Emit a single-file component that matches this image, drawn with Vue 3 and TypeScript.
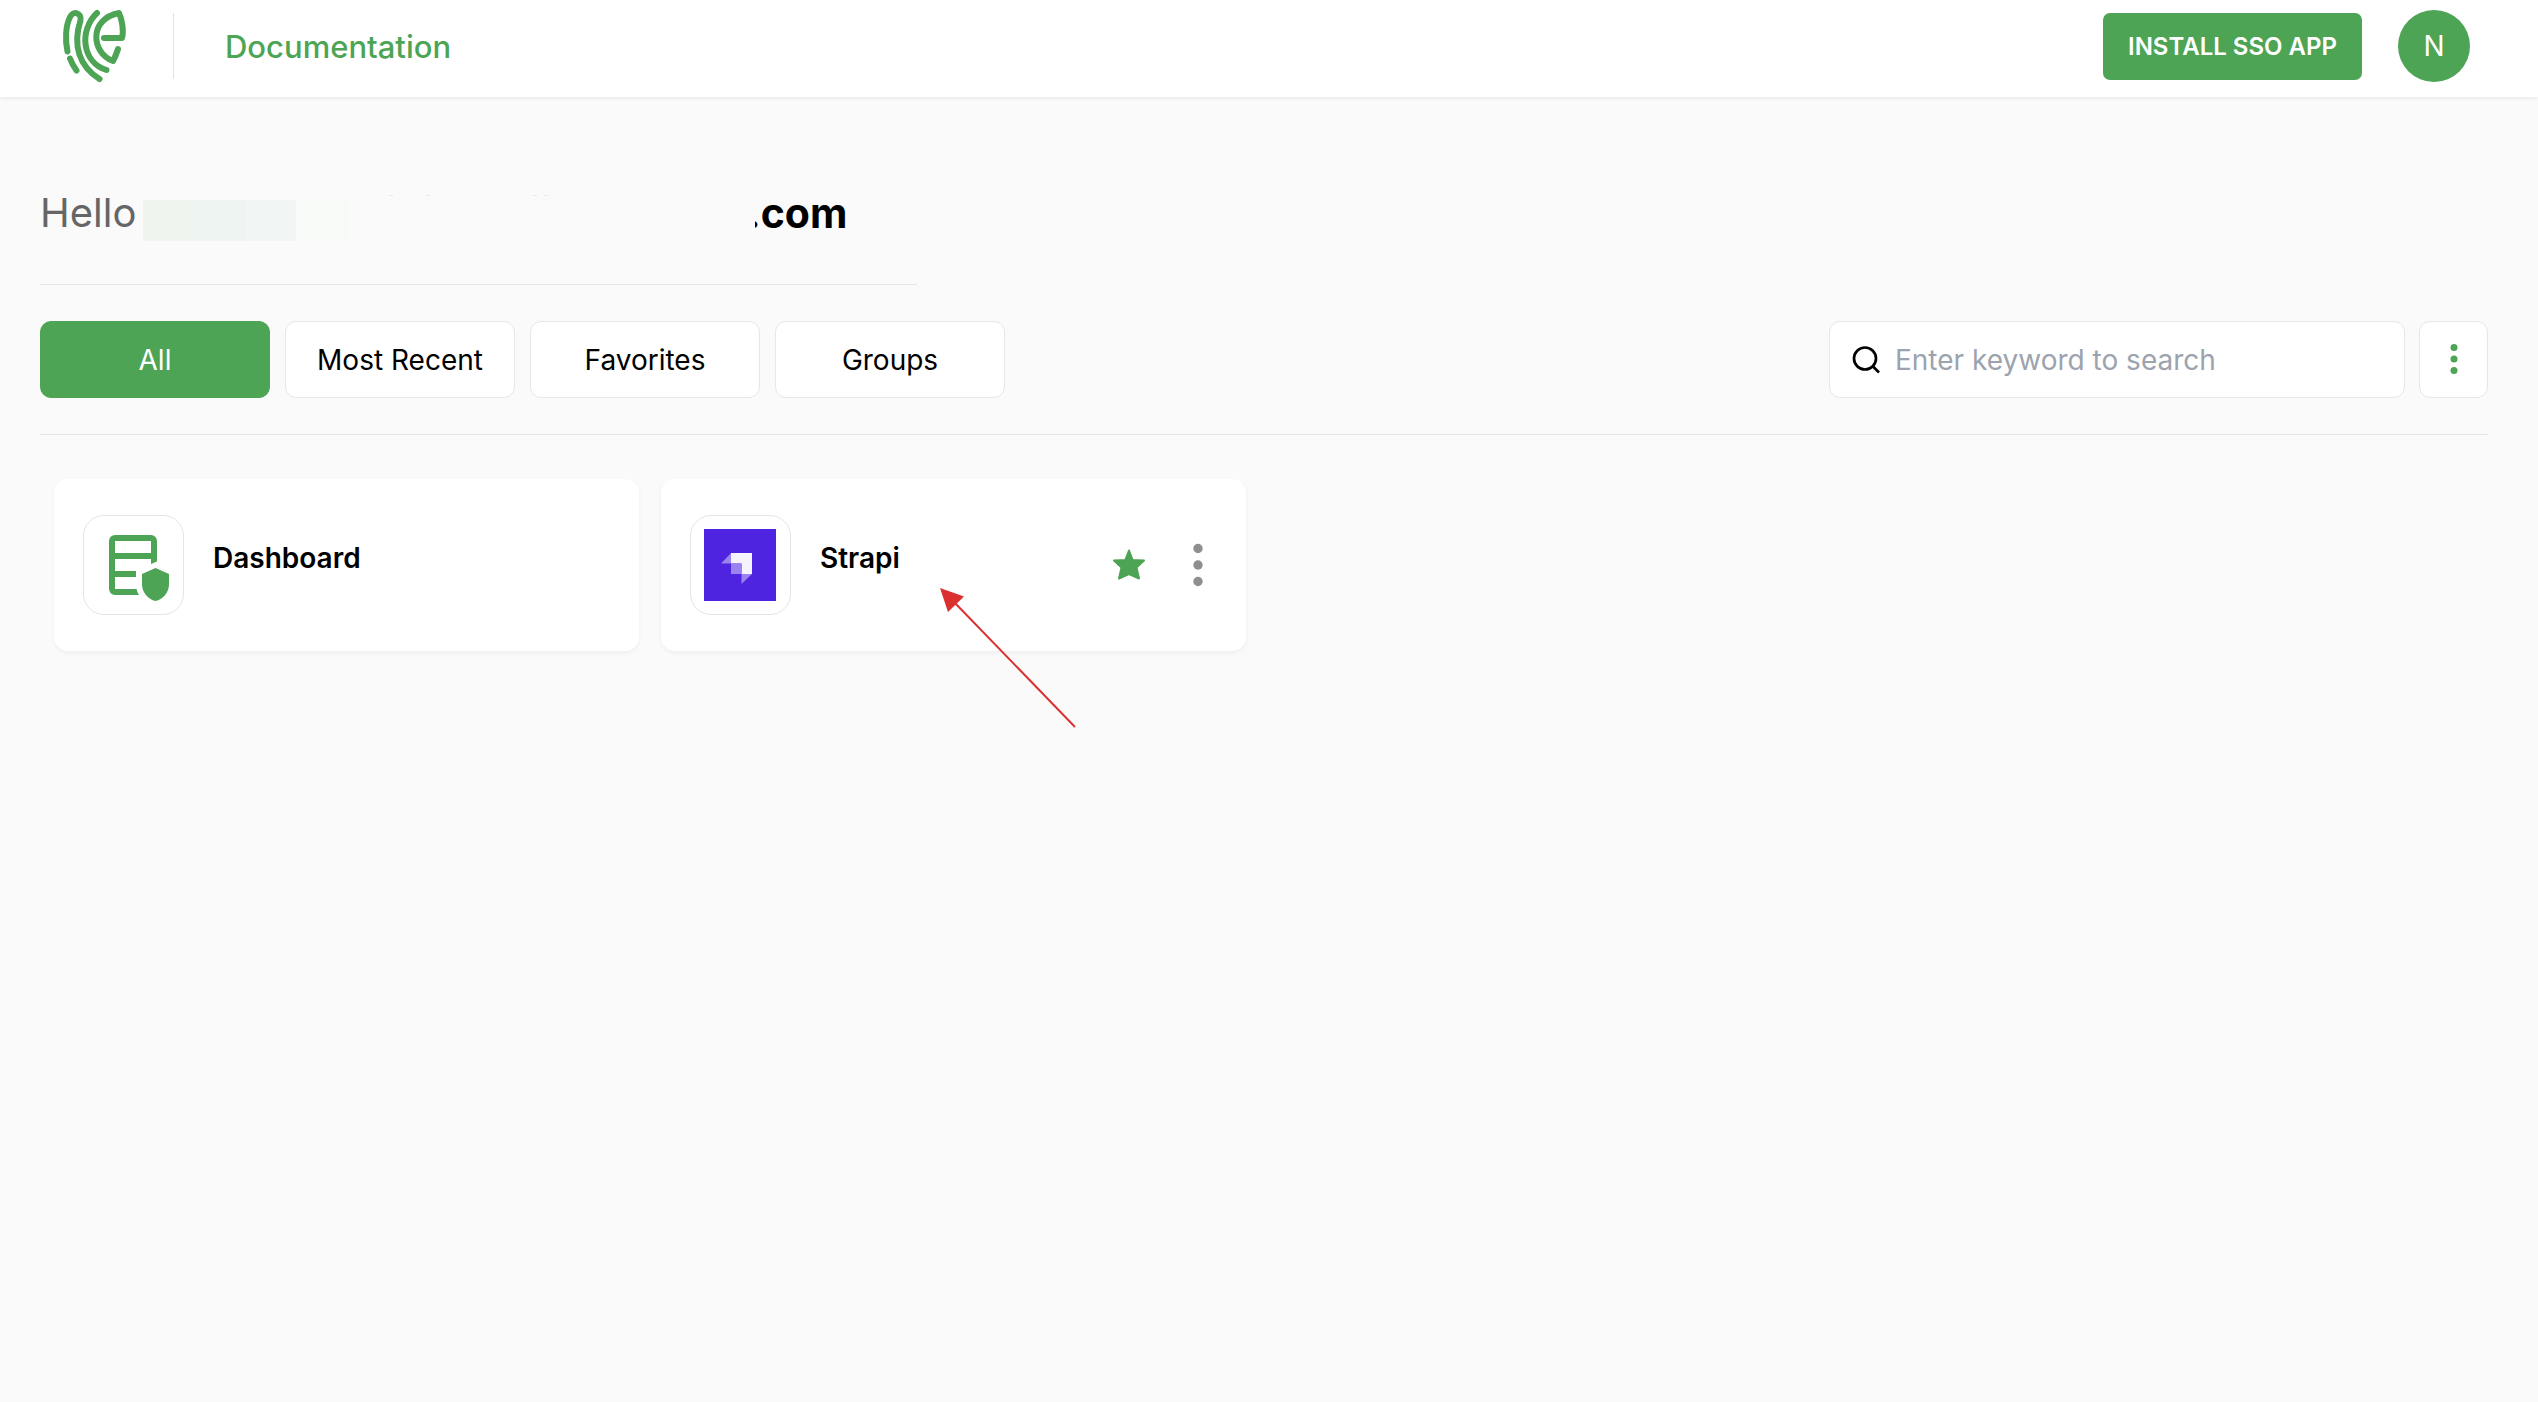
<script setup lang="ts">
import { ref } from 'vue'

interface AppEntry {
  name: string
  icon: 'dashboard' | 'strapi'
  favorite: boolean
}

const tabs: string[] = ['All', 'Most Recent', 'Favorites', 'Groups']
const activeTab = ref<string>('All')
const keyword = ref<string>('')

const apps: AppEntry[] = [
  { name: 'Dashboard', icon: 'dashboard', favorite: false },
  { name: 'Strapi', icon: 'strapi', favorite: true },
]
</script>

<template>
  <div class="page">
    <header class="topbar">
      <a class="logo" href="#" aria-label="Home">
        <svg width="66" height="76" viewBox="0 0 66 76" fill="none" stroke="#4ca454" stroke-width="6" stroke-linecap="round" stroke-linejoin="round">
          <path d="M6.500 43.500C4 32 4.500 18 9 9C12 2.500 21 4.500 19.500 12.500C11.500 37 18 58 38.500 71" />
          <path d="M9 50.500Q11.500 57 15.500 62.500" />
          <path d="M36 5C18 22 20.500 54 45.500 62" />
          <path d="M43 30H61C63 22.500 61 11.500 58 5C27 11 30.500 45.500 52 53Q55 47.500 57 41" />
        </svg>
      </a>
      <span class="divider"></span>
      <a class="doc-link" href="#">Documentation</a>
      <button class="install" type="button">INSTALL SSO APP</button>
      <button class="avatar" type="button" aria-label="Account">N</button>
    </header>

    <main class="content">
      <h1 class="greeting">
        <span class="hello">Hello</span>
        <span class="redacted">
          <i class="block b1"></i><i class="block b2"></i><i class="block b3"></i><i class="block b4"></i>
          <svg class="specks" width="160" height="2" viewBox="0 0 160 2" fill="#e9e9e9">
            <rect width="4" height="1" /><rect x="37" width="4" height="1" />
            <rect x="144" width="4" height="1" /><rect x="155" width="4" height="1" />
          </svg>
        </span>
        <span class="domain">.com</span>
      </h1>

      <div class="toolbar">
        <nav class="tabs">
          <button
            v-for="tab in tabs"
            :key="tab"
            type="button"
            class="tab"
            :class="{ active: tab === activeTab }"
            @click="activeTab = tab"
          >{{ tab }}</button>
        </nav>
        <label class="search">
          <svg width="28" height="28" viewBox="0 0 28 28" fill="none" stroke="#000" stroke-width="2.700">
            <circle cx="13" cy="12.500" r="11" />
            <path d="M20.500 20L27 26.500" />
          </svg>
          <input v-model="keyword" type="text" placeholder="Enter keyword to search" aria-label="Search" />
        </label>
        <button class="more" type="button" aria-label="More options">
          <svg width="8" height="32" viewBox="0 0 8 32" fill="#4ca454">
            <circle cx="4" cy="3.500" r="3.500" /><circle cx="4" cy="15" r="3.500" /><circle cx="4" cy="26.500" r="3.500" />
          </svg>
        </button>
      </div>

      <section class="cards">
        <article v-for="app in apps" :key="app.name" class="card">
          <div class="app-icon">
            <svg v-if="app.icon === 'dashboard'" width="72" height="72" viewBox="-2 0 24 24" fill="#4ca454">
              <path d="M4 2a2 2 0 0 0-2 2v16a2 2 0 0 0 2 2h8c-.4-.6-.7-1.300-.8-2H4v-4h7v-2H4v-4h12v1.700l2-.9V4a2 2 0 0 0-2-2zm0 2h12v4H4z" />
              <path d="M17.500 13l4.500 2v3.500c0 2.500-1.900 5-4.500 5.500c-2.600-.5-4.500-3-4.500-5.500V15z" />
            </svg>
            <svg v-else width="72" height="72" viewBox="0 0 72 72">
              <rect width="72" height="72" fill="#4e24e0" />
              <path d="M27 24H48V45H37.500V34.500H27z" fill="#f5f3fd" />
              <path d="M27 34.500H37.500V45H27zM27 24V34.500H17zM37.500 45H48L37.500 55z" fill="#9a83ee" />
            </svg>
          </div>
          <h2 class="app-name">{{ app.name }}</h2>
          <div v-if="app.favorite" class="actions">
            <button type="button" aria-label="Remove from favorites">
              <svg width="32" height="32" viewBox="0 0 32 32" fill="#4ca454" stroke="#4ca454" stroke-width="2" stroke-linejoin="round">
                <path d="M16 1.500L19.700 11L31 11.500L23.500 18.500L26 29.500L16 25L6 29.500L8.500 18.500L1 11.500L12.300 11z" />
              </svg>
            </button>
            <button type="button" aria-label="App menu">
              <svg width="10" height="44" viewBox="0 0 10 44" fill="#8f8f8f">
                <circle cx="5" cy="5.500" r="4.700" /><circle cx="5" cy="22" r="4.700" /><circle cx="5" cy="38.500" r="4.700" />
              </svg>
            </button>
          </div>
          <svg v-if="app.favorite" class="pointer" width="138" height="142" viewBox="0 0 138 142">
            <path d="M14 14L135 139" stroke="#db3030" stroke-width="2" />
            <path d="M0 0L24 8.500L8 24z" fill="#db3030" />
          </svg>
        </article>
      </section>
    </main>
  </div>
</template>

<style>
body {
  background: #fafafa;
}
</style>

<style scoped>
.page {
  min-height: 100vh;
  background: #fafafa;
  color: #000;
  font-family: Inter, "Liberation Sans", sans-serif;
}

button {
  font-family: inherit;
  border: 0;
  padding: 0;
  cursor: pointer;
}

svg {
  display: block;
  flex: none;
}

.topbar {
  display: flex;
  align-items: center;
  box-sizing: border-box;
  height: 97px;
  padding: 0 68px 5px 61px;
  background: #fff;
  box-shadow: 0 2px 3px rgba(0, 0, 0, 0.06);
}

.divider {
  width: 1px;
  height: 66px;
  margin: 0 51px 0 46px;
  background: #e2e2e2;
}

.doc-link {
  color: #4ca454;
  font-size: 31px;
  font-weight: 500;
  text-decoration: none;
}

.install {
  width: 259px;
  height: 67px;
  margin: 0 36px 0 auto;
  border-radius: 7px;
  background: #4ca454;
  color: #fff;
  font-size: 24px;
  font-weight: 600;
}

.avatar {
  width: 72px;
  height: 72px;
  border-radius: 50%;
  background: #4ca454;
  color: #fff;
  font-size: 28px;
}

.content {
  padding: 84px 50px 40px 40px;
}

.greeting {
  display: flex;
  align-items: center;
  box-sizing: border-box;
  max-width: 877px;
  height: 104px;
  margin: 0;
  padding-bottom: 40px;
  border-bottom: 1px solid #e5e5e5;
  font-size: 40px;
  font-weight: 400;
}

.hello {
  width: 103px;
  color: #666;
}

.redacted {
  position: relative;
  z-index: 1;
  display: flex;
  width: 612px;
  height: 41px;
  margin-top: 15px;
  background: #fafafa;
}

.block {
  width: 51px;
}

.b1 {
  background: #eff5ee;
}

.b2 {
  background: #eef4f1;
}

.b3 {
  background: #f1f6f4;
}

.b4 {
  background: #f7faf7;
}

.specks {
  position: absolute;
  left: 246px;
  top: -5px;
}

.domain {
  margin-left: -8px;
  font-size: 41px;
  font-weight: 700;
}

.toolbar {
  display: flex;
  align-items: stretch;
  gap: 14px;
  height: 77px;
  padding: 36px 0;
  border-bottom: 1px solid #e5e5e5;
}

.tabs {
  display: flex;
  gap: 15px;
  margin-right: auto;
}

.tab {
  width: 230px;
  border: 1px solid #e5e7eb;
  border-radius: 11px;
  background: #fff;
  color: #000;
  font-size: 28px;
}

.tab.active {
  border-color: #4ca454;
  background: #4ca454;
  color: #fff;
}

.search {
  display: flex;
  align-items: center;
  gap: 15px;
  box-sizing: border-box;
  width: 576px;
  padding: 0 22px;
  border: 1px solid #e5e7eb;
  border-radius: 11px;
  background: #fff;
}

.search input {
  flex: 1;
  min-width: 0;
  padding: 0;
  border: 0;
  outline: 0;
  background: none;
  color: #000;
  font-family: inherit;
  font-size: 28px;
}

.search input::placeholder {
  color: #9ca3af;
  opacity: 1;
}

.more {
  display: flex;
  align-items: center;
  justify-content: center;
  width: 69px;
  border: 1px solid #e5e7eb;
  border-radius: 11px;
  background: #fff;
}

.cards {
  display: grid;
  grid-template-columns: repeat(4, 1fr);
  gap: 22px;
  padding: 44px 28px 0 14px;
}

.card {
  position: relative;
  display: flex;
  align-items: center;
  box-sizing: border-box;
  padding: 36px 43px 36px 29px;
  border-radius: 14px;
  background: #fff;
  box-shadow: 0 2px 4px rgba(0, 0, 0, 0.05);
}

.app-icon {
  display: flex;
  align-items: center;
  box-sizing: border-box;
  width: 101px;
  height: 100px;
  padding-left: 13px;
  border: 1px solid #e5e5e5;
  border-radius: 21px;
}

.app-name {
  margin: 0 auto 14px 29px;
  font-size: 28px;
  font-weight: 600;
}

.actions {
  display: flex;
  align-items: center;
  gap: 48px;
}

.actions button {
  background: none;
}

.pointer {
  position: absolute;
  left: 279px;
  top: 109px;
  z-index: 1;
}
</style>
